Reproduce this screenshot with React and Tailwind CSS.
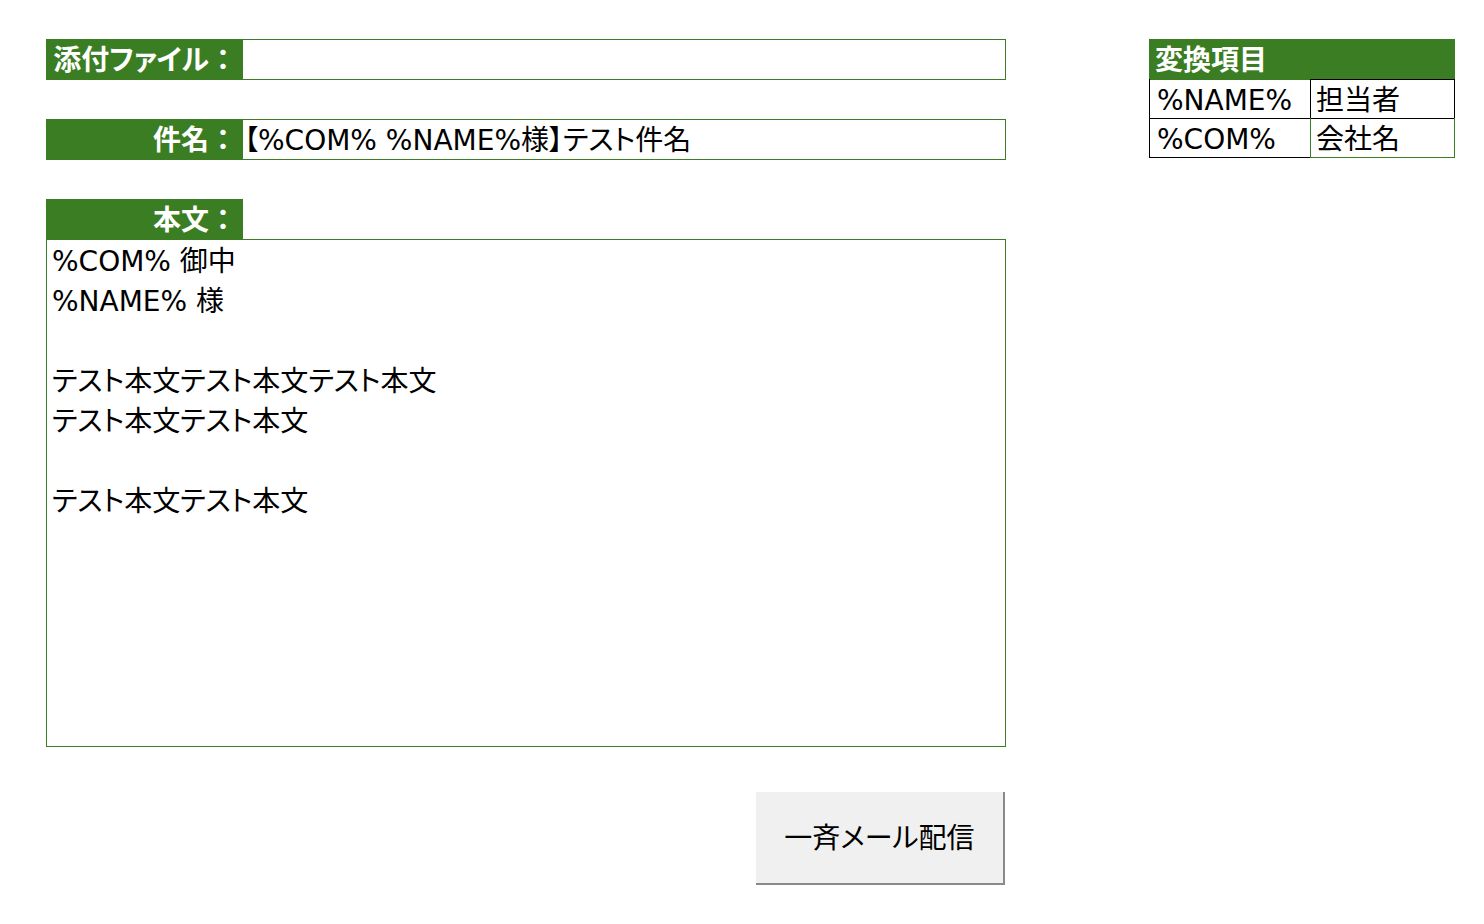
import React from 'react';

// 一斉メール配信フォーム
const Label = ({ children }) => (
  <div className="w-[197px] h-[41px] bg-[#3b7d23] text-white font-bold text-[28px] leading-[44px] text-right pr-[6px] shrink-0 overflow-hidden">
    {children}
    <span className="[font-feature-settings:normal]">：</span>
  </div>
);

const FieldRow = ({ label, value }) => (
  <div className="flex h-[41px]">
    <Label>{label}</Label>
    <div className="flex-1 border border-l-0 border-[#3b7d23] text-[28px] leading-[42px] pl-[1px] text-black whitespace-nowrap overflow-hidden">
      {value}
    </div>
  </div>
);

const bodyLines = [
  '%COM% 御中',
  '%NAME% 様',
  '',
  'テスト本文テスト本文テスト本文',
  'テスト本文テスト本文',
  '',
  'テスト本文テスト本文',
];

export default function App() {
  return (
    <div className="w-[1484px] h-[924px] bg-white flex pt-[39px] pl-[46px] font-['DejaVu_Sans','Noto_Sans_CJK_JP',sans-serif] [font-feature-settings:'palt']">
      {/* 入力エリア */}
      <div className="w-[960px] flex flex-col">
        <FieldRow label="添付ファイル" value="" />
        <div className="h-[39px]" />
        <FieldRow label="件名" value="【%COM% %NAME%様】テスト件名" />
        <div className="h-[39px]" />
        <Label>本文</Label>
        <div className="h-[508px] -mt-px border border-[#3b7d23] pl-[5px] pt-[2px] text-[28px] leading-[40px] text-black">
          {bodyLines.map((line, i) => (
            <div key={i} className="h-[40px] whitespace-nowrap">{line}</div>
          ))}
        </div>
        <div className="flex justify-end pt-[45px] pr-[1px]">
          <button
            type="button"
            className="w-[249px] h-[93px] pt-[3px] bg-[#f0f0f0] border-r-2 border-b-2 border-[#8a8a8a] text-[28px] text-black font-['DejaVu_Sans','Noto_Sans_CJK_JP',sans-serif] [font-feature-settings:'palt']"
          >
            一斉メール配信
          </button>
        </div>
      </div>

      {/* 変換項目テーブル */}
      <div className="ml-[143px] w-[306px] flex flex-col text-[28px]">
        <div className="h-[41px] bg-[#3b7d23] text-white font-bold leading-[44px] pl-[6px]">変換項目</div>
        <div className="flex h-[40px] -mt-px">
          <div className="w-[161px] border-l border-b border-black leading-[44px] pl-[7px] whitespace-nowrap">%NAME%</div>
          <div className="flex-1 border-l border-r border-t border-b border-black leading-[42px] pl-[5px]">担当者</div>
        </div>
        <div className="flex h-[40px] -mt-px">
          <div className="w-[161px] border-l border-b border-black leading-[44px] pl-[7px] whitespace-nowrap">%COM%</div>
          <div className="flex-1 border-l border-r border-b border-[#3b7d23] leading-[44px] pl-[5px]">会社名</div>
        </div>
      </div>
    </div>
  );
}
